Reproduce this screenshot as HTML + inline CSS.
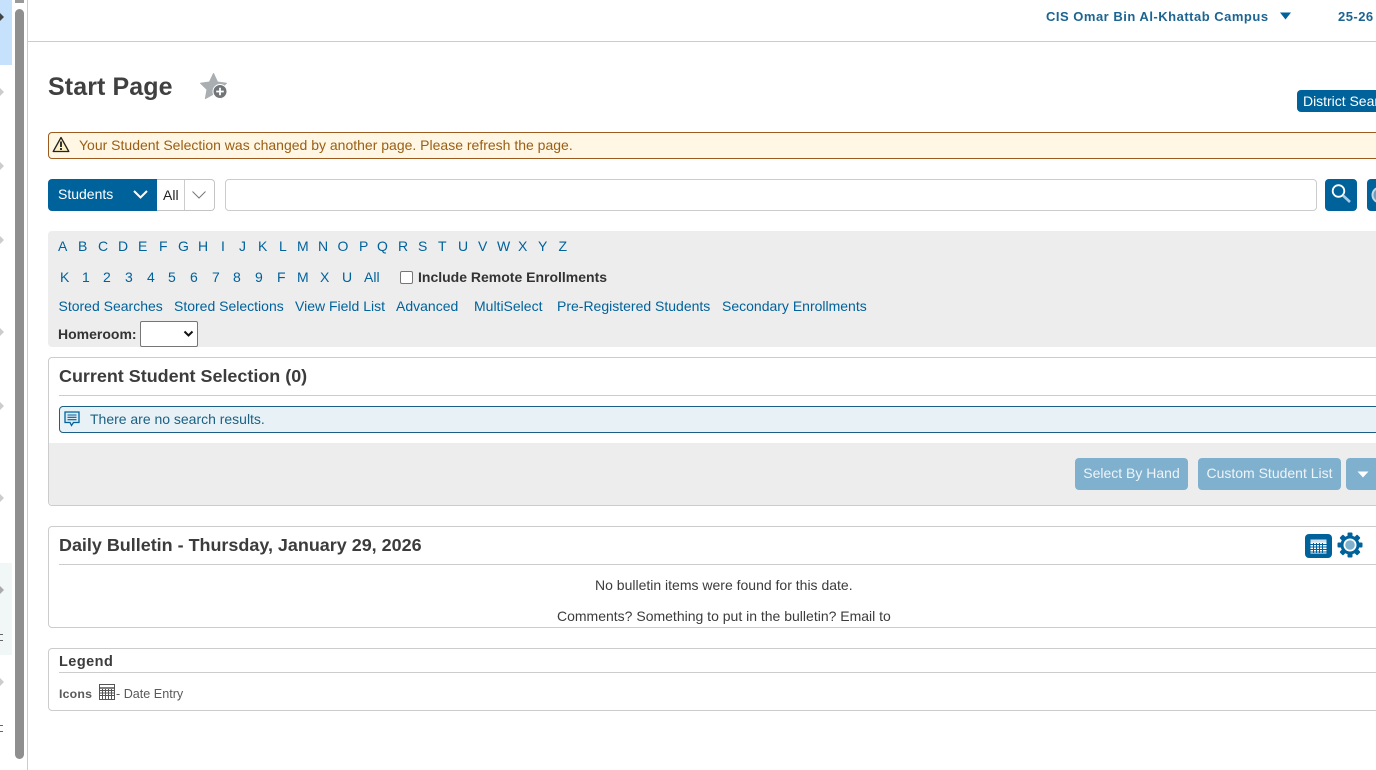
<!DOCTYPE html>
<html lang="en"><head><meta charset="utf-8"><title>Start Page</title>
<style>
html,body{margin:0;padding:0;width:1376px;height:770px;overflow:hidden;background:#fff;font-family:"Liberation Sans",sans-serif;font-size:14px;color:#333}
.a{position:absolute;white-space:nowrap}
.l{color:#00629b;line-height:16px}
svg{position:absolute;display:block}
.box{position:absolute;left:48px;width:1340px;border:1px solid #ccc;border-radius:4px;box-sizing:border-box;background:#fff}
.hr{position:absolute;height:1px;background:#ccc}
.arr{position:absolute;left:0;width:0;height:0;border-left:4px solid #ccc;border-top:4px solid transparent;border-bottom:4px solid transparent}
.btn{position:absolute;top:458px;height:32px;background:#7fb0ce;border-radius:4px;color:#eef4f8;line-height:31px;text-align:center}
</style></head><body>
<!-- left strip -->
<div class="a" style="left:0;top:0;width:12px;height:65px;background:#c5e1fb"></div>
<div class="a" style="left:0;top:563px;width:12px;height:92px;background:#f1f6f6"></div>
<div class="arr" style="top:13px;border-left-color:#444"></div>
<div class="arr" style="top:88px"></div><div class="arr" style="top:162px"></div><div class="arr" style="top:236px"></div><div class="arr" style="top:328px"></div><div class="arr" style="top:402px"></div><div class="arr" style="top:494px"></div><div class="arr" style="top:586px;border-left-color:#aaa"></div><div class="arr" style="top:678px"></div>
<div class="a" style="left:0;top:634px;width:3px;height:7px;border-top:1px solid #666;border-bottom:1px solid #666;box-sizing:border-box"></div>
<div class="a" style="left:0;top:725px;width:3px;height:7px;border-top:1px solid #666;border-bottom:1px solid #666;box-sizing:border-box"></div>
<div class="a" style="left:15px;top:0;width:9px;height:3px;background:#999"></div>
<div class="a" style="left:15px;top:9px;width:9px;height:750px;background:#8f8f8f;border-radius:5px"></div>
<div class="a" style="left:27px;top:0;width:1px;height:770px;background:#ccc"></div>
<!-- top -->
<div class="hr" style="left:28px;top:41px;width:1348px"></div>
<div class="a" style="left:1046px;top:9px;font-weight:bold;font-size:13px;letter-spacing:.5px;color:#1c6491;line-height:15px">CIS Omar Bin Al-Khattab Campus</div>
<svg style="left:1279px;top:12px" width="13" height="8"><path d="M1 .5h11L6.500 7.500z" fill="#00629b"/></svg>
<div class="a" style="left:1338px;top:9px;font-weight:bold;font-size:13px;letter-spacing:.47px;color:#1c6491;line-height:15px">25-26</div>
<!-- title -->
<div class="a" style="left:48px;top:72px;font-size:25px;font-weight:bold;color:#404040;line-height:30px;letter-spacing:.1px">Start Page</div>
<svg style="left:199px;top:72px" width="30" height="29" viewBox="0 0 30 29"><path d="M14.500 1.500l4 8.500 9 1.200-6.500 6.300 1.600 9-8.100-4.400-8.100 4.400 1.600-9L1.500 11.200l9-1.200z" fill="#a9aeb2" stroke="#a9aeb2" stroke-linejoin="round"/><circle cx="21" cy="19.500" r="7" fill="#6f7579" stroke="#fff" stroke-width="1"/><path d="M21 15.700v7.600M17.200 19.500h7.600" stroke="#fff" stroke-width="1.800"/></svg>
<div class="a" style="left:1297px;top:90px;width:90px;height:22px;background:#00629b;border-radius:4px;color:#fff;line-height:22px;padding-left:6px;box-sizing:border-box;letter-spacing:-.02px">District Search</div>
<!-- warning -->
<div class="a" style="left:48px;top:132px;width:1340px;height:27px;box-sizing:border-box;background:#fff6e3;border:1px solid #9c5a1e;border-radius:4px"></div>
<svg style="left:52px;top:136px" width="18" height="17" viewBox="0 0 18 17"><path d="M9 1.500L16.800 15.500H1.200z" fill="#fdf0c4" stroke="#222" stroke-width="1.300" stroke-linejoin="round"/><path d="M9 5.500v5.500M9 12v2" stroke="#111" stroke-width="1.700"/></svg>
<div class="a" style="left:79px;top:137px;color:#9a5f14;line-height:16px">Your Student Selection was changed by another page. Please refresh the page.</div>
<!-- search -->
<div class="a" style="left:48px;top:179px;width:110px;height:32px;background:#00629b;border-radius:4px 0 0 4px;color:#fff;line-height:30px;padding-left:10px;box-sizing:border-box">Students</div>
<svg style="left:132px;top:189px" width="17" height="11"><path d="M2 2l6.500 6.500L15 2" fill="none" stroke="#fff" stroke-width="2"/></svg>
<div class="a" style="left:157px;top:179px;width:58px;height:32px;box-sizing:border-box;background:#fff;border:1px solid #c4c4c4;border-left:0;border-radius:0 4px 4px 0"></div>
<div class="a" style="left:184px;top:180px;width:1px;height:30px;background:#ccc"></div>
<div class="a" style="left:163px;top:187px;color:#222;line-height:16px">All</div>
<svg style="left:191px;top:190px" width="16" height="10"><path d="M1.500 1.500L8 8l6.500-6.500" fill="none" stroke="#777" stroke-width="1"/></svg>
<div class="a" style="left:225px;top:179px;width:1092px;height:32px;box-sizing:border-box;background:#fff;border:1px solid #ccc;border-radius:4px"></div>
<div class="a" style="left:1325px;top:179px;width:32px;height:32px;background:#00629b;border-radius:4px"></div>
<svg style="left:1329px;top:182px" width="24" height="24" viewBox="0 0 24 24"><circle cx="9.500" cy="9" r="5.800" fill="none" stroke="#fff" stroke-width="1.800"/><path d="M14 13.500l7 6.500" stroke="#a9cde3" stroke-width="2.600"/></svg>
<div class="a" style="left:1367px;top:179px;width:20px;height:32px;background:#00629b;border-radius:4px"></div>
<svg style="left:1371px;top:186px" width="5" height="18"><circle cx="9" cy="9" r="7.500" fill="#6f9fbe" stroke="#c4dae8" stroke-width="2"/></svg>
<!-- gray panel -->
<div class="a" style="left:48px;top:231px;width:1340px;height:116px;background:#ededed;border-radius:4px"></div>
<div class="a l" style="left:58px;top:238px">A</div><div class="a l" style="left:78px;top:238px">B</div><div class="a l" style="left:98px;top:238px">C</div><div class="a l" style="left:118px;top:238px">D</div><div class="a l" style="left:138px;top:238px">E</div><div class="a l" style="left:159px;top:238px">F</div><div class="a l" style="left:178px;top:238px">G</div><div class="a l" style="left:198px;top:238px">H</div><div class="a l" style="left:221px;top:238px">I</div><div class="a l" style="left:239px;top:238px">J</div><div class="a l" style="left:258px;top:238px">K</div><div class="a l" style="left:279px;top:238px">L</div><div class="a l" style="left:297px;top:238px">M</div><div class="a l" style="left:318px;top:238px">N</div><div class="a l" style="left:337.500px;top:238px">O</div><div class="a l" style="left:359px;top:238px">P</div><div class="a l" style="left:377px;top:238px">Q</div><div class="a l" style="left:398px;top:238px">R</div><div class="a l" style="left:418px;top:238px">S</div><div class="a l" style="left:438px;top:238px">T</div><div class="a l" style="left:458px;top:238px">U</div><div class="a l" style="left:478px;top:238px">V</div><div class="a l" style="left:497px;top:238px">W</div><div class="a l" style="left:518px;top:238px">X</div><div class="a l" style="left:538px;top:238px">Y</div><div class="a l" style="left:558.500px;top:238px">Z</div>
<div class="a l" style="left:60px;top:269px">K</div><div class="a l" style="left:82px;top:269px">1</div><div class="a l" style="left:103px;top:269px">2</div><div class="a l" style="left:125px;top:269px">3</div><div class="a l" style="left:147px;top:269px">4</div><div class="a l" style="left:168px;top:269px">5</div><div class="a l" style="left:190px;top:269px">6</div><div class="a l" style="left:212px;top:269px">7</div><div class="a l" style="left:233px;top:269px">8</div><div class="a l" style="left:255px;top:269px">9</div><div class="a l" style="left:277px;top:269px">F</div><div class="a l" style="left:297px;top:269px">M</div><div class="a l" style="left:320px;top:269px">X</div><div class="a l" style="left:342px;top:269px">U</div><div class="a l" style="left:364px;top:269px">All</div>
<div class="a" style="left:400px;top:271px;width:13px;height:13px;box-sizing:border-box;background:#fff;border:1px solid #767676;border-radius:2px"></div>
<div class="a" style="left:418px;top:269px;font-weight:bold;color:#333;line-height:16px">Include Remote Enrollments</div>
<div class="a l" style="left:58.500px;top:298px">Stored Searches</div>
<div class="a l" style="left:174px;top:298px">Stored Selections</div>
<div class="a l" style="left:295px;top:298px">View Field List</div>
<div class="a l" style="left:396px;top:298px">Advanced</div>
<div class="a l" style="left:474px;top:298px">MultiSelect</div>
<div class="a l" style="left:557px;top:298px">Pre-Registered Students</div>
<div class="a l" style="left:722px;top:298px">Secondary Enrollments</div>
<div class="a" style="left:58px;top:326px;font-weight:bold;color:#333;line-height:16px">Homeroom:</div>
<div class="a" style="left:140px;top:321px;width:58px;height:26px;box-sizing:border-box;background:#fff;border:1px solid #767676;border-radius:2px"></div>
<svg style="left:183px;top:330px" width="11" height="8"><path d="M1.500 1.500L5.500 5.500 9.500 1.500" fill="none" stroke="#111" stroke-width="2"/></svg>
<!-- selection box -->
<div class="box" style="top:357px;height:149px"></div>
<div class="a" style="left:49px;top:443px;width:1330px;height:62px;background:#ededed;border-radius:0 0 0 4px"></div>
<div class="a" style="left:59px;top:366px;font-size:17.950px;font-weight:bold;color:#3c3c3c;line-height:21px">Current Student Selection (0)</div>
<div class="hr" style="left:59px;top:395px;width:1320px"></div>
<div class="a" style="left:59px;top:406px;width:1330px;height:27px;box-sizing:border-box;background:#e8f2f6;border:1px solid #1b5f86;border-radius:4px"></div>
<svg style="left:64px;top:411px" width="16" height="17" viewBox="0 0 16 17"><path d="M1 1h14v10.500H9.500L7.500 14.500 6 11.500H1z" fill="#dcebf3" stroke="#00629b" stroke-width="1.300"/><path d="M3.500 4h9M3.500 6.300h9M3.500 8.700h9" stroke="#00629b" stroke-width="1.100"/></svg>
<div class="a" style="left:90px;top:411px;color:#1c6082;line-height:16px;letter-spacing:-.01px">There are no search results.</div>
<div class="btn" style="left:1075px;width:113px">Select By Hand</div>
<div class="btn" style="left:1198px;width:143px">Custom Student List</div>
<div class="btn" style="left:1346px;width:40px"></div>
<svg style="left:1357px;top:471px" width="12" height="7"><path d="M.5 .5h11L6 6.500z" fill="#fff"/></svg>
<!-- bulletin -->
<div class="box" style="top:526px;height:102px"></div>
<div class="a" style="left:59px;top:535px;font-size:17.950px;font-weight:bold;color:#3c3c3c;line-height:21px">Daily Bulletin - Thursday, January 29, 2026</div>
<div class="hr" style="left:59px;top:564px;width:1317px"></div>
<div class="a" style="left:1305px;top:534px;width:27px;height:24px;background:#00629b;border-radius:4px"></div>
<svg style="left:1310px;top:539px" width="17" height="15" viewBox="0 0 17 15"><rect x=".5" y=".5" width="16" height="14" fill="#fff"/><rect x=".5" y=".5" width="16" height="3" fill="#cfe0ea"/><path d="M.5 5.500h16M.5 8h16M.5 10.500h16M.5 13h16M3.500 4v10M6.500 4v10M9.500 4v10M12.500 4v10" stroke="#00629b" stroke-width="1"/></svg>
<svg style="left:1337px;top:532px" width="26" height="26" viewBox="0 0 26 26"><g fill="#00629b"><circle cx="13" cy="13" r="9.500"/><rect x="10.500" y="0.500" width="5" height="25" rx="1"/><rect x="10.500" y="0.500" width="5" height="25" rx="1" transform="rotate(45 13 13)"/><rect x="10.500" y="0.500" width="5" height="25" rx="1" transform="rotate(90 13 13)"/><rect x="10.500" y="0.500" width="5" height="25" rx="1" transform="rotate(135 13 13)"/></g><circle cx="13" cy="13" r="6.500" fill="#fff"/><circle cx="13" cy="13" r="4.800" fill="#7fb0ce"/></svg>
<div class="a" style="left:595px;top:577px;color:#3c3c3c;line-height:16px">No bulletin items were found for this date.</div>
<div class="a" style="left:557px;top:608px;color:#3c3c3c;line-height:16px">Comments? Something to put in the bulletin? Email to</div>
<!-- legend -->
<div class="box" style="top:648px;height:63px"></div>
<div class="a" style="left:59px;top:654px;font-size:14.500px;font-weight:bold;color:#3c3c3c;line-height:17px;letter-spacing:.45px">Legend</div>
<div class="hr" style="left:59px;top:672px;width:1317px"></div>
<div class="a" style="left:59px;top:687px;font-size:12.300px;font-weight:bold;color:#5a5a5a;line-height:15px;letter-spacing:.2px">Icons</div>
<svg style="left:99px;top:684px" width="16" height="16" viewBox="0 0 16 16"><rect x=".5" y=".5" width="15" height="15" fill="#fff" stroke="#555"/><path d="M0 4h16" stroke="#555" stroke-width="1.500"/><path d="M1 6.500h14M1 9h14M1 11.500h14M3.500 5v10M6.500 5v10M9.500 5v10M12.500 5v10" stroke="#555" stroke-width="1"/></svg>
<div class="a" style="left:116px;top:687px;font-size:12.600px;color:#5a5a5a;line-height:15px">- Date Entry</div>
</body></html>
